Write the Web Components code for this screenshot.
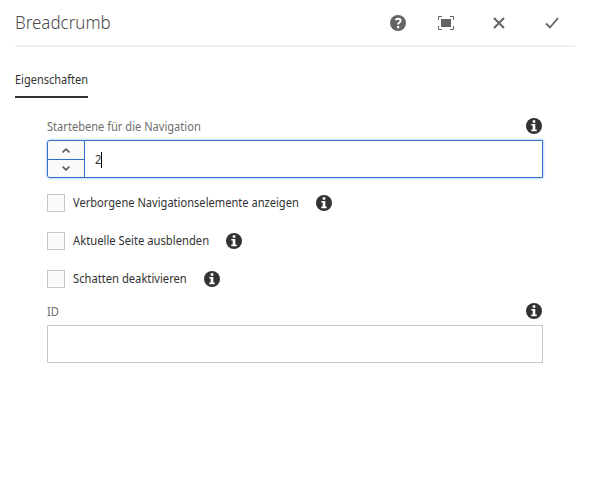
<!DOCTYPE html>
<html lang="de">
<head>
<meta charset="utf-8">
<title>Breadcrumb</title>
<style>
html,body{margin:0;height:100%;background:#fff;overflow:hidden}
body{font-family:"Noto Sans","Open Sans",sans-serif;font-size:12.5px;line-height:18px;color:#323232}
</style>
</head>
<body>
<edit-dialog></edit-dialog>
<script>
class Base extends HTMLElement{
  constructor(){super();this.attachShadow({mode:'open'}).innerHTML=this.view();}
}
const define=(name,view)=>customElements.define(name,class extends Base{view(){return view.call(this)}});

define('info-icon',()=>`
<style>:host{display:block;width:16px;height:16px;flex:none}svg{display:block}</style>
<svg width="16" height="16" viewBox="0 0 16 16"><circle cx="8" cy="8" r="8" fill="#323232"/><path fill="#fff" d="M6.7 2.2h2.6v2.5H6.7zM5.3 6h4v5.6h1.4v1.6H5.3v-1.6h1.4v-4H5.3z"/></svg>`);

define('text-fit',function(){return `
<style>:host{display:block;white-space:nowrap;width:${this.getAttribute('width')}px}
span{display:inline-block;transform:scaleX(${this.getAttribute('scale')||.89});transform-origin:0 0}</style><span><slot></slot></span>`});

define('dialog-header',()=>`
<style>
:host{display:flex;box-sizing:border-box;height:47px;margin:0 14px 0 15px;border-bottom:2px solid #f0f0f0;color:#4b4b4b;font-size:18.5px;font-weight:300;line-height:44px}
nav{display:flex;margin:1px 16px 0 auto;align-items:center}
svg{display:block;fill:#646464}
.full{margin-left:32px}.close{margin-left:39px}.done{margin-left:40px}
</style>
<slot></slot>
<nav>
<svg width="16" height="16" viewBox="0 0 16 16"><circle cx="8" cy="8" r="8"/><path fill="none" stroke="#fff" stroke-width="2" d="M5.6 5.200C6.2 3.400 10.600 3 10.600 5.800C10.600 7.600 8.100 7.500 8.100 9.600"/><path fill="#fff" d="M7 11h2.200v2.200H7z"/></svg>
<svg class="full" width="16" height="14" viewBox="0 0 16 14"><path d="M3 3h10v8H3z"/><path fill="none" stroke="#646464" d="M.5 4V.5H4M12 .5h3.500V4M15.500 10v3.500H12M4 13.500H.5V10"/></svg>
<svg class="close" width="12" height="12" viewBox="0 0 12 12"><path fill="none" stroke="#646464" stroke-width="2" d="M1 1l10 10M11 1L1 11"/></svg>
<svg class="done" width="14" height="12" viewBox="0 0 14 12"><path fill="none" stroke="#646464" stroke-width="1.8" d="M1 6.500L5 10.500L13 1"/></svg>
</nav>`);

define('tab-item',()=>`
<style>:host{display:block;box-sizing:border-box;width:73px;height:51px;margin-left:15px;padding-top:24px;border-bottom:2px solid #323232}</style><slot></slot>`);

define('form-field',()=>`
<style>:host{display:block;width:496px}header{display:flex;box-sizing:border-box;justify-content:space-between;align-items:center;height:18px;padding-right:1px;color:#6e6e6e}.label{padding-top:2px}.control{margin-top:5px}</style>
<header><div class="label"><slot name="label"></slot></div><info-icon></info-icon></header><div class="control"><slot></slot></div>`);

define('number-input',()=>`
<style>
:host{display:flex;box-sizing:border-box;height:38px;border:1px solid #326ec8;border-radius:3px 0 0 3px;box-shadow:0 0 3px #378ef0aa;background:#fff}
aside{width:36px;border-right:1px solid #326ec8;display:grid;grid-template-rows:18px 17px;row-gap:1px;background:#326ec8;border-radius:2px 0 0 2px;overflow:hidden}
aside div{background:#fafafa;display:grid;place-items:center}
svg{fill:none;stroke:#5a5a5a;stroke-width:1.7}
.value{display:flex;align-items:center;padding:1px 0 0 10px}
i{width:1px;height:16px;background:#000}
</style>
<aside><div><svg width="8" height="5" viewBox="0 0 8 5"><path d="M.6 4.300L4 1.200L7.400 4.300"/></svg></div><div><svg width="8" height="5" viewBox="0 0 8 5"><path d="M.6 .7L4 3.800L7.400 .7"/></svg></div></aside>
<div class="value"><slot></slot><i></i></div>`);

define('text-input',()=>`<style>:host{display:block;box-sizing:border-box;height:38px;border:1px solid #c8c8c8;background:#fff}</style>`);

define('check-row',()=>`
<style>:host{display:flex;align-items:center;height:18px;margin-bottom:20px}
.box{box-sizing:border-box;width:18px;height:18px;border:1px solid #c8c8c8;background:#fafafa;margin-right:8px}
info-icon{margin-left:17px}</style>
<div class="box"></div><slot></slot><info-icon></info-icon>`);

define('edit-dialog',()=>`
<style>
:host{display:block;height:484px;background:#fff}
main{padding:19px 0 0 47px}
.checks{padding-top:16px}
form-field.id{margin-top:-6px}
</style>
<dialog-header><text-fit width="96" scale=".915">Breadcrumb</text-fit></dialog-header>
<tab-item><text-fit width="73" scale=".88">Eigenschaften</text-fit></tab-item>
<main>
<form-field><text-fit slot="label" width="154" scale=".887">Startebene für die Navigation</text-fit><number-input><text-fit width="6">2</text-fit></number-input></form-field>
<div class="checks">
<check-row><text-fit width="226" scale=".888">Verborgene Navigationselemente anzeigen</text-fit></check-row>
<check-row><text-fit width="136" scale=".898">Aktuelle Seite ausblenden</text-fit></check-row>
<check-row><text-fit width="114" scale=".895">Schatten deaktivieren</text-fit></check-row>
</div>
<form-field class="id"><text-fit slot="label" width="12">ID</text-fit><text-input></text-input></form-field>
</main>`);
</script>
</body>
</html>
